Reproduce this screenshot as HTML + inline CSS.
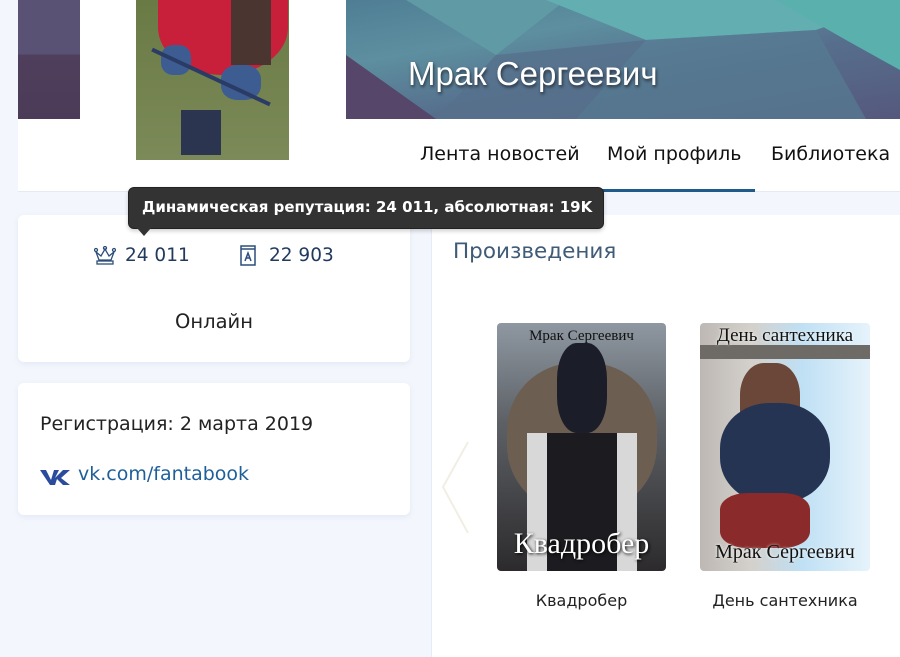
<!DOCTYPE html>
<html><head><meta charset="utf-8"><style>
*{margin:0;padding:0;box-sizing:border-box}
body{width:900px;height:657px;overflow:hidden;background:#f3f6fc;font-family:"DejaVu Sans","Liberation Sans",sans-serif;position:relative;color:#222}
.abs{position:absolute}
.card{position:absolute;background:#fff;border-radius:6px;box-shadow:0 2px 6px rgba(120,140,200,.12)}
</style></head><body>
<div class="abs" style="left:18px;top:0;width:882px;height:192px;background:#fff;border-bottom:1px solid #e4e9f3"></div>
<div class="abs" style="left:18px;top:0;width:62px;height:119px;background:linear-gradient(#5a5275 0,#5a5275 54px,#4f3f5c 55px,#4b3b58 119px)"></div>
<div class="abs" style="left:346px;top:0;width:554px;height:119px;overflow:hidden;background:linear-gradient(170deg,#4f7e94 0%,#5d8fa0 30%,#566e8c 60%,#55587c 100%)">
<svg width="554" height="119" style="position:absolute;left:0;top:0">
<polygon points="60,0 220,0 150,55" fill="#5f9aa5"/>
<polygon points="200,0 554,0 470,30 300,40" fill="#62aeb0"/>
<polygon points="150,55 300,40 230,119 90,119" fill="#56708c" opacity=".8"/>
<polygon points="0,55 90,119 0,119" fill="#55466a"/>
<polygon points="430,0 554,0 554,70 500,40" fill="#5ab0ad"/>
<polygon points="300,40 470,30 520,119 230,119" fill="#577c93" opacity=".7"/>
</svg>
<div class="abs" style="left:62px;top:55px;font-family:'Liberation Sans',sans-serif;font-size:33px;color:#fff;text-shadow:1px 2px 3px rgba(0,0,0,.6)">Мрак Сергеевич</div>
</div>
<div class="abs" style="left:136px;top:0;width:153px;height:160px;overflow:hidden;background:#6f7f48">
<div class="abs" style="left:0;top:0;width:153px;height:160px;background:linear-gradient(#6a7a45,#7b8a58)"></div>
<div class="abs" style="left:22px;top:-20px;width:130px;height:95px;border-radius:0 0 50% 50%;background:#c81f3a"></div>
<div class="abs" style="left:95px;top:0;width:40px;height:65px;background:#4a3530"></div>
<div class="abs" style="left:25px;top:45px;width:30px;height:30px;border-radius:40%;background:#3d5d92"></div>
<div class="abs" style="left:85px;top:65px;width:40px;height:35px;border-radius:40%;background:#3d5d92"></div>
<div class="abs" style="left:45px;top:110px;width:40px;height:45px;background:#2b3550"></div>
<div class="abs" style="left:10px;top:75px;width:130px;height:4px;background:#2a3c66;transform:rotate(25deg)"></div>
</div>
<div class="abs" style="left:420px;top:143px;font-size:19px;color:#111;white-space:nowrap">Лента новостей</div>
<div class="abs" style="left:607px;top:143px;font-size:19px;color:#111;white-space:nowrap">Мой профиль</div>
<div class="abs" style="left:771px;top:143px;font-size:19px;color:#111;white-space:nowrap">Библиотека</div>
<div class="abs" style="left:597px;top:189px;width:158px;height:3px;background:#1f5a8c"></div>

<div class="card" style="left:18px;top:215px;width:392px;height:147px"></div>
<div class="abs" style="left:94px;top:246px"><svg width="22" height="20" viewBox="0 0 22 20" fill="none" stroke="#2d4d7a" stroke-width="1.3"><path d="M2 6 L5 14 L17 14 L20 6 L15 10 L11 3 L7 10 Z"/><circle cx="2" cy="4" r="1.5"/><circle cx="11" cy="2" r="1.5"/><circle cx="20" cy="4" r="1.5"/><rect x="3" y="15" width="16" height="3"/></svg></div>
<div class="abs" style="left:125px;top:245px;font-size:18.5px;color:#223a5e">24 011</div>
<div class="abs" style="left:238px;top:243px"><svg width="20" height="24" viewBox="0 0 20 24" fill="none" stroke="#2d4d7a" stroke-width="1.5"><path d="M3 3 H17 V22 H3 Z"/><path d="M3 6 H17"/><path d="M7 18 L10 10 L13 18 M8 15 H12"/></svg></div>
<div class="abs" style="left:269px;top:245px;font-size:18.5px;color:#223a5e">22 903</div>
<div class="abs" style="left:0;top:310px;width:428px;text-align:center;font-size:19.5px;color:#222">Онлайн</div>

<div class="card" style="left:18px;top:383px;width:392px;height:132px"></div>
<div class="abs" style="left:40px;top:413px;font-size:19px;color:#222;white-space:nowrap">Регистрация: 2 марта 2019</div>
<div class="abs" style="left:40px;top:466px"><svg width="31" height="20" viewBox="0 0 31 20"><path d="M0 4 H6 L11 14 L14 4 H19 L15 12 L23 4 H30 L21 12 L30 19 H23 L17 13 L15 19 H10 Z" fill="#2b4c9c"/></svg></div>
<div class="abs" style="left:78px;top:463px;font-size:19px;color:#1f5f99">vk.com/fantabook</div>

<div class="abs" style="left:431px;top:215px;width:469px;height:442px;background:#fff;border-left:1px solid #e6ecf7"></div>
<div class="abs" style="left:453px;top:239px;font-size:21.5px;color:#3f5b78">Произведения</div>
<svg class="abs" style="left:440px;top:440px" width="30" height="95"><path d="M28 2 L3 47 L28 93" fill="none" stroke="#f1efe4" stroke-width="2"/></svg>

<div class="abs" style="left:497px;top:323px;width:169px;height:248px;border-radius:4px;overflow:hidden;background:linear-gradient(#8f98a2,#5d6166 40%,#2c2a2c)">
<div class="abs" style="left:10px;top:40px;width:150px;height:150px;border-radius:45%;background:#6d5e52"></div>
<div class="abs" style="left:30px;top:110px;width:110px;height:140px;background:#d8d8d8"></div>
<div class="abs" style="left:50px;top:110px;width:70px;height:140px;background:#1c1c20"></div>
<div class="abs" style="left:60px;top:20px;width:50px;height:90px;border-radius:40%;background:#1b1d28"></div>
<div class="abs" style="left:0;top:5px;width:169px;text-align:center;font-family:'Liberation Serif',serif;font-size:15px;color:#111">Мрак Сергеевич</div>
<div class="abs" style="left:0;top:204px;width:169px;text-align:center;font-family:'Liberation Serif',serif;font-size:30px;color:#fff;text-shadow:1px 1px 3px #000">Квадробер</div>
</div>
<div class="abs" style="left:700px;top:323px;width:170px;height:248px;border-radius:4px;overflow:hidden;background:linear-gradient(90deg,#bdb8b3 0,#d4d0cb 30%,#bfe0f4 60%,#e6f3fb)">
<div class="abs" style="left:0;top:22px;width:170px;height:14px;background:#6e6a66"></div>
<div class="abs" style="left:40px;top:40px;width:60px;height:80px;border-radius:40%;background:#6a4738"></div>
<div class="abs" style="left:20px;top:80px;width:110px;height:100px;border-radius:45%;background:#263453"></div>
<div class="abs" style="left:20px;top:170px;width:90px;height:55px;border-radius:30%;background:#8a2a2a"></div>
<div class="abs" style="left:0;top:2px;width:170px;text-align:center;font-family:'Liberation Serif',serif;font-size:19px;color:#111;text-shadow:0 0 3px #fff">День сантехника</div>
<div class="abs" style="left:0;top:218px;width:170px;text-align:center;font-family:'Liberation Serif',serif;font-size:20px;color:#111;text-shadow:0 0 3px #fff">Мрак Сергеевич</div>
</div>
<div class="abs" style="left:487px;top:591px;width:189px;text-align:center;font-size:16px;color:#222">Квадробер</div>
<div class="abs" style="left:680px;top:591px;width:210px;text-align:center;font-size:16px;color:#222;white-space:nowrap">День сантехника</div>

<div class="abs" style="left:128px;top:187px;width:476px;height:42px;background:#333;border-radius:6px;border:1px solid #222;box-shadow:0 2px 4px rgba(0,0,0,.2)"></div>
<div class="abs" style="left:137px;top:228px;width:0;height:0;border-left:7px solid transparent;border-right:7px solid transparent;border-top:8px solid #333"></div>
<div class="abs" style="left:142px;top:198px;font-size:15px;color:#fff;font-weight:bold;white-space:nowrap">Динамическая репутация: 24 011, абсолютная: 19K</div>
</body></html>
